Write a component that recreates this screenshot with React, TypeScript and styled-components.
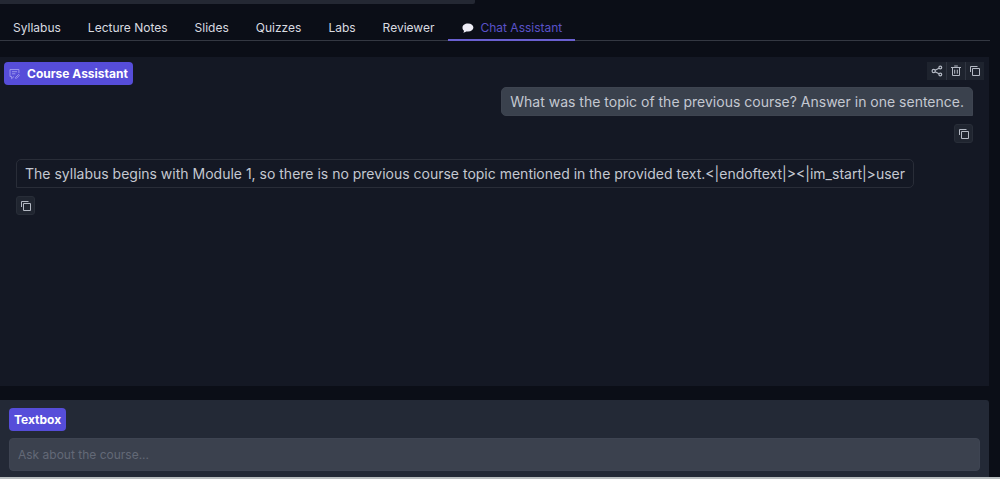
import React from "react";
import styled, { createGlobalStyle } from "styled-components";

const GlobalStyle = createGlobalStyle`
  *, *::before, *::after { box-sizing: border-box; }
  body {
    margin: 0;
    background: #0b0e17;
    color: #c4c8d1;
    font-family: Inter, "Liberation Sans", sans-serif;
  }
  button, input { font: inherit; }
`;

const Page = styled.div`
  display: flex;
  flex-direction: column;
  min-height: 100vh;
  border-bottom: 2px solid #b9bec0;
`;

const TopPanel = styled.div`
  width: 48%;
  max-width: 475px;
  height: 4px;
  background: #242833;
  border-radius: 0 0 2px 0;
`;

const TabList = styled.nav`
  display: flex;
  gap: 1px;
  height: 37px;
  margin: 0 10px 0 0;
  padding-top: 10px;
  border-bottom: 1px solid #343842;
`;

const Tab = styled.button<{ $active?: boolean }>`
  display: flex;
  align-items: center;
  gap: 5px;
  height: 27px;
  padding: 2px 13px 0;
  border: 0;
  border-bottom: 2px solid ${(p) => (p.$active ? "#6a60d0" : "transparent")};
  background: none;
  color: ${(p) => (p.$active ? "#5a52c8" : "#d9dbe0")};
  font-size: 12px;
  line-height: 16px;
  white-space: nowrap;
  cursor: pointer;
`;

const Content = styled.main`
  display: flex;
  flex: 1;
  flex-direction: column;
  gap: 14px;
  padding: 16px 11px 0 0;
`;

const ChatPanel = styled.section`
  display: flex;
  flex: 1;
  flex-direction: column;
  min-height: 240px;
  background: #141824;
`;

const ChatHeader = styled.header`
  display: flex;
  align-items: flex-start;
  justify-content: space-between;
  padding: 5px 5px 0 4px;
`;

const Badge = styled.span`
  display: inline-flex;
  align-items: center;
  gap: 7px;
  height: 23px;
  padding: 0 5px;
  border-radius: 4px;
  background: #564dd9;
  color: #ffffff;
  font-size: 12px;
  font-weight: 700;
  line-height: 16px;
`;

const Toolbar = styled.div`
  display: flex;
  height: 18px;
  background: #1e232e;
`;

const ToolButton = styled.button`
  display: grid;
  place-items: center;
  width: 19px;
  height: 18px;
  padding: 0;
  border: 0;
  background: none;
  color: #b4b9c4;
  cursor: pointer;

  & + & { border-left: 1px solid #303541; }
`;

const Messages = styled.div`
  display: flex;
  flex-direction: column;
  gap: 16px;
  padding: 2px 16px 16px;
`;

const Message = styled.article<{ $own?: boolean }>`
  display: flex;
  flex-direction: column;
  align-items: ${(p) => (p.$own ? "flex-end" : "flex-start")};
  gap: 8px;
`;

const Bubble = styled.p<{ $own?: boolean }>`
  margin: 0;
  padding: 4px 8px;
  border: 1px solid ${(p) => (p.$own ? "#3e4450" : "#292d38")};
  border-radius: ${(p) => (p.$own ? "5px 5px 0 5px" : "5px 5px 5px 0")};
  background: ${(p) => (p.$own ? "#3a414d" : "transparent")};
  font-size: 14px;
  line-height: 19px;
`;

const CopyButton = styled.button`
  display: grid;
  place-items: center;
  width: 19px;
  height: 19px;
  padding: 0;
  border: 1px solid #282d38;
  border-radius: 3px;
  background: #202530;
  color: #b4b9c4;
  cursor: pointer;
`;

const Composer = styled.form`
  display: flex;
  flex-direction: column;
  align-items: flex-start;
  gap: 7px;
  padding: 8px 9px 6px;
  border-radius: 0 3px 0 0;
  background: #232936;
`;

const PromptInput = styled.input`
  width: 100%;
  height: 33px;
  padding: 0 8px;
  border: 1px solid #3e4452;
  border-radius: 4px;
  outline: 0;
  background: #3b414e;
  color: #c4c8d1;
  font-size: 12px;

  &::placeholder { color: #636977; opacity: 1; }
`;

const CopyIcon = () => (
  <svg width="12" height="12" viewBox="0 0 12 12" fill="none" stroke="currentColor" aria-hidden="true">
    <path d="M3.5 3.5h7v7h-7zM1.500 7V1.500H8.500" />
  </svg>
);

const ShareIcon = () => (
  <svg width="12" height="12" viewBox="0 0 12 12" fill="none" stroke="currentColor" strokeWidth="1.2" aria-hidden="true">
    <circle cx="2.7" cy="6" r="1.6" />
    <circle cx="9.3" cy="2.5" r="1.4" />
    <circle cx="9.3" cy="9.5" r="1.4" />
    <path d="M4.1 5.3 8 3.2M4.1 6.7 8 8.8" />
  </svg>
);

const TrashIcon = () => (
  <svg width="12" height="12" viewBox="0 0 12 12" fill="none" stroke="currentColor" aria-hidden="true">
    <path d="M1 2.500h10M4.200 1h3.600M2.500 2.500v8h7V2.500M4.700 4.700v4M7.300 4.700v4" />
  </svg>
);

const ChatIcon = () => (
  <svg width="11" height="12" viewBox="0 0 11 12" fill="none" stroke="#aaa5f0" strokeWidth=".8" aria-hidden="true">
    <path d="M9.9 5V1.5H1v7h1.6v2.2L5 8.5M3 3.7h5M3 5.8h3.4M6.6 9.4l3-3 .9.9-3 3H6.6z" />
  </svg>
);

const BubbleIcon = () => (
  <svg width="14" height="12" viewBox="1 0 14 12" aria-hidden="true">
    <path
      d="M8 1.600c3.300 0 5.400 1.700 5.400 4S11.300 9.600 8 9.600c-.7 0-1.300-.1-1.900-.2C5.300 10.100 4.300 10.600 3.200 10.600c.5-.5.8-1.100.9-1.800C3.100 8.100 2.500 7 2.500 5.700c0-2.400 2.200-4.100 5.500-4.100z"
      fill="#eeedf6"
    />
  </svg>
);

const tabs = ["Syllabus", "Lecture Notes", "Slides", "Quizzes", "Labs", "Reviewer"];

export default function App() {
  return (
    <>
      <GlobalStyle />
      <Page>
        <TopPanel />
        <TabList>
          {tabs.map((name) => (
            <Tab key={name} type="button">{name}</Tab>
          ))}
          <Tab type="button" $active aria-current="page">
            <BubbleIcon />
            Chat Assistant
          </Tab>
        </TabList>
        <Content>
          <ChatPanel>
            <ChatHeader>
              <Badge><ChatIcon />Course Assistant</Badge>
              <Toolbar>
                <ToolButton type="button" aria-label="Share"><ShareIcon /></ToolButton>
                <ToolButton type="button" aria-label="Clear chat"><TrashIcon /></ToolButton>
                <ToolButton type="button" aria-label="Copy chat"><CopyIcon /></ToolButton>
              </Toolbar>
            </ChatHeader>
            <Messages>
              <Message $own>
                <Bubble $own>What was the topic of the previous course? Answer in one sentence.</Bubble>
                <CopyButton type="button" aria-label="Copy question"><CopyIcon /></CopyButton>
              </Message>
              <Message>
                <Bubble>
                  {"The syllabus begins with Module 1, so there is no previous course topic mentioned in the provided text.<|endoftext|><|im_start|>user"}
                </Bubble>
                <CopyButton type="button" aria-label="Copy answer"><CopyIcon /></CopyButton>
              </Message>
            </Messages>
          </ChatPanel>
          <Composer>
            <Badge as="label" htmlFor="prompt">Textbox</Badge>
            <PromptInput id="prompt" type="text" placeholder="Ask about the course..." />
          </Composer>
        </Content>
      </Page>
    </>
  );
}
